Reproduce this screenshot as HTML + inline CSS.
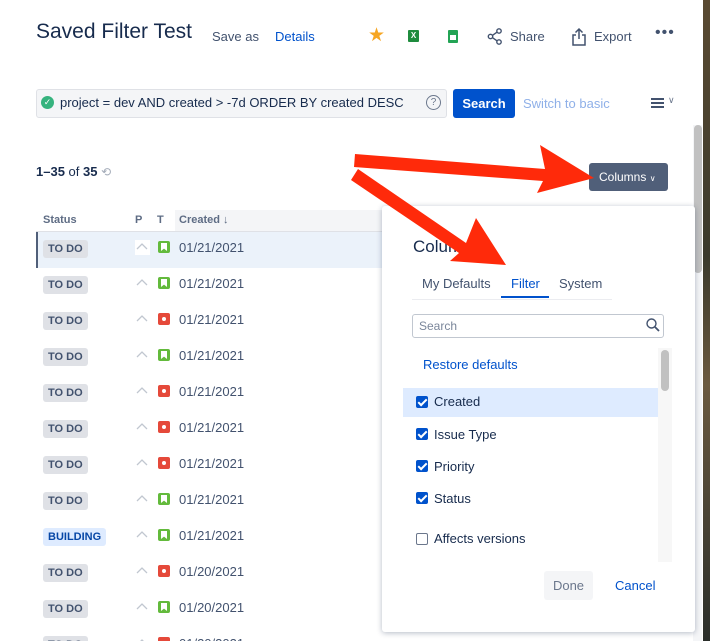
<!DOCTYPE html><html><head><meta charset="utf-8"><style>
*{box-sizing:border-box;margin:0;padding:0}
html,body{width:710px;height:641px;overflow:hidden}
body{background:#fff;font-family:"Liberation Sans",sans-serif;color:#172b4d;position:relative}
.a{position:absolute;white-space:nowrap}
.lz{font-size:11px;font-weight:bold;color:#42526e;background:#dfe1e6;border-radius:3px;padding:3px 5px;}
.row{position:absolute;left:36px;width:346px;height:36px}
.date{position:absolute;left:143px;top:8px;font-size:13px;color:#42526e}
.ic{position:absolute;left:122px;top:9px;width:12px;height:12px;border-radius:2px}
.g{background:#63ba3c}.r{background:#e5493a}
.g:after{content:"";position:absolute;left:3px;top:2px;width:6px;height:8px;background:#fff;clip-path:polygon(0 0,100% 0,100% 100%,50% 70%,0 100%)}
.r:after{content:"";position:absolute;left:4px;top:4px;width:4px;height:4px;border-radius:50%;background:#fff}
.pr{position:absolute;left:99px;top:9px;width:14px;height:10px}
.cb{position:absolute;left:416px;width:12px;height:12px;border-radius:2px;background:#0052cc}
.cb:after{content:"";position:absolute;left:4px;top:1px;width:3px;height:7px;border:solid #fff;border-width:0 2px 2px 0;transform:rotate(45deg)}
.it{font-size:13px;color:#172b4d}
</style></head><body>
<div class="a" style="left:703px;top:0;width:7px;height:641px;background:linear-gradient(#5a4a32,#3b3a2c 40%,#6b5a40 60%,#2a2e2a)"></div>
<div class="a" style="left:693px;top:125px;width:9px;height:516px;background:#f4f5f7"></div>
<div class="a" style="left:694px;top:125px;width:8px;height:148px;background:#c1c1c1;border-radius:4px"></div>
<div class="a" style="left:36px;top:20px;font-size:21px;font-weight:500">Saved Filter Test</div>
<div class="a" style="left:212px;top:29px;font-size:13px;color:#42526e">Save as</div>
<div class="a" style="left:275px;top:29px;font-size:13px;color:#0052cc">Details</div>
<div class="a" style="left:368px;top:26px;font-size:19px;color:#f6a623;line-height:20px">★</div>
<div class="a" style="left:408px;top:30px;width:11px;height:12px;background:#1f8c3e;border-radius:1px;color:#fff;font-size:8px;font-weight:bold;text-align:center;line-height:12px">X</div>
<div class="a" style="left:448px;top:30px;width:10px;height:13px;background:#23a455;border-radius:1px"><div style="margin:5px 2px;width:6px;height:5px;background:#fff"></div></div>
<svg class="a" style="left:487px;top:28px" width="16" height="17" viewBox="0 0 16 17"><g fill="none" stroke="#42526e" stroke-width="1.4"><circle cx="12" cy="3" r="2.2"/><circle cx="3.5" cy="8.5" r="2.2"/><circle cx="12" cy="14" r="2.2"/><path d="M5.5 7.3L10 4.2M5.5 9.7L10 12.8"/></g></svg>
<div class="a" style="left:510px;top:29px;font-size:13px;color:#42526e">Share</div>
<svg class="a" style="left:571px;top:27px" width="16" height="19" viewBox="0 0 16 19"><g fill="none" stroke="#42526e" stroke-width="1.5"><path d="M8 12V2M4.5 5.5L8 2l3.5 3.5M5 8H2v10h12V8h-3"/></g></svg>
<div class="a" style="left:594px;top:29px;font-size:13px;color:#42526e">Export</div>
<div class="a" style="left:655px;top:24px;font-size:16px;color:#42526e;letter-spacing:1px">•••</div>
<div class="a" style="left:36px;top:89px;width:411px;height:29px;background:#f4f5f7;border:1px solid #dfe1e6;border-radius:3px"></div>
<div class="a" style="left:41px;top:96px;width:13px;height:13px;border-radius:50%;background:#36b37e;color:#fff;font-size:9px;text-align:center;line-height:13px">✓</div>
<div class="a" style="left:60px;top:95px;font-size:13px;color:#172b4d">project = dev AND created &gt; -7d ORDER BY created DESC</div>
<div class="a" style="left:426px;top:95px;width:15px;height:15px;border:1.3px solid #6b778c;border-radius:50%;font-size:10px;text-align:center;line-height:13px;color:#6b778c">?</div>
<div class="a" style="left:453px;top:89px;width:62px;height:29px;background:#0052cc;border-radius:3px;color:#fff;font-size:13px;font-weight:bold;text-align:center;line-height:29px">Search</div>
<div class="a" style="left:523px;top:96px;font-size:13px;color:#8fb0e8">Switch to basic</div>
<div class="a" style="left:651px;top:98px;width:13px;height:2px;background:#42526e;box-shadow:0 4px #42526e,0 8px #42526e"></div>
<div class="a" style="left:668px;top:95px;font-size:9px;color:#6b778c">∨</div>
<div class="a" style="left:36px;top:164px;font-size:13px;color:#172b4d"><b>1–35</b> of <b>35</b> <span style="color:#a5adba;font-size:12px">⟲</span></div>
<div class="a" style="left:589px;top:163px;width:79px;height:28px;background:#505f79;border-radius:3px;color:#fff;font-size:12px;line-height:28px;padding-left:10px">Columns <span style="font-size:8px">∨</span></div>
<div class="a" style="left:175px;top:210px;width:210px;height:22px;background:#f4f5f7"></div>
<div class="a" style="left:43px;top:214px;font-size:11px;font-weight:bold;color:#5e6c84">Status</div>
<div class="a" style="left:135px;top:214px;font-size:11px;font-weight:bold;color:#5e6c84">P</div>
<div class="a" style="left:157px;top:214px;font-size:11px;font-weight:bold;color:#5e6c84">T</div>
<div class="a" style="left:179px;top:214px;font-size:11px;font-weight:bold;color:#5e6c84">Created ↓</div>
<div class="a" style="left:36px;top:231px;width:346px;height:1px;background:#dfe1e6"></div>
<div class="a" style="left:36px;top:232px;width:346px;height:36px;background:#ebf2fa;border-left:2px solid #505f79"></div>
<div class="a" style="left:135px;top:240px;width:15px;height:15px;background:#fff"></div>
<div id="rows"></div>
<script>
(function(){var html="";
var d=["01/21/2021","01/21/2021","01/21/2021","01/21/2021","01/21/2021","01/21/2021","01/21/2021","01/21/2021","01/21/2021","01/20/2021","01/20/2021","01/20/2021"];
var ty=["g","g","r","g","r","r","r","g","g","r","g","r"];
for(var i=0;i<12;i++){var yy=232+i*36;
var st=i==8?'<span class="lz" style="background:#deebff;color:#0747a6">BUILDING</span>':'<span class="lz">TO DO</span>';
html+='<div class="row" style="top:'+yy+'px"><div class="a" style="left:7px;top:7px">'+st+'</div><svg class="pr" viewBox="0 0 14 10"><path d="M2 8l5-5 5 5" fill="none" stroke="#c1c7d0" stroke-width="1.3"/></svg><div class="ic '+ty[i]+'"></div><div class="date">'+d[i]+'</div></div>';}
document.getElementById("rows").innerHTML=html;})();
</script>
<div class="a" style="left:382px;top:206px;width:313px;height:426px;background:#fff;border-radius:3px;box-shadow:0 1px 6px rgba(9,30,66,.3)"></div>
<div class="a" style="left:413px;top:237px;font-size:17px;color:#172b4d">Columns</div>
<div class="a" style="left:412px;top:299px;width:200px;height:1px;background:#ebecf0"></div>
<div class="a" style="left:422px;top:276px;font-size:13px;color:#42526e">My Defaults</div>
<div class="a" style="left:511px;top:276px;font-size:13px;color:#0052cc">Filter</div>
<div class="a" style="left:501px;top:296px;width:48px;height:2px;background:#0052cc"></div>
<div class="a" style="left:559px;top:276px;font-size:13px;color:#42526e">System</div>
<div class="a" style="left:412px;top:314px;width:252px;height:24px;border:1px solid #c1c7d0;border-radius:3px"></div>
<div class="a" style="left:419px;top:319px;font-size:12px;color:#7a869a">Search</div>
<svg class="a" style="left:645px;top:317px" width="16" height="16" viewBox="0 0 16 16"><circle cx="6.5" cy="6.5" r="4.5" fill="none" stroke="#42526e" stroke-width="1.4"/><path d="M10 10l4 4" stroke="#42526e" stroke-width="1.8"/></svg>
<div class="a" style="left:658px;top:348px;width:14px;height:214px;background:#f7f7f7"></div>
<div class="a" style="left:661px;top:350px;width:8px;height:41px;background:#c1c1c1;border-radius:4px"></div>
<div class="a" style="left:423px;top:357px;font-size:13px;color:#0052cc">Restore defaults</div>
<div class="a" style="left:403px;top:388px;width:255px;height:29px;background:#deebff"></div>
<div class="cb a" style="top:396px"></div><div class="a it" style="left:434px;top:394px">Created</div>
<div class="cb a" style="top:428px"></div><div class="a it" style="left:434px;top:427px">Issue Type</div>
<div class="cb a" style="top:460px"></div><div class="a it" style="left:434px;top:459px">Priority</div>
<div class="cb a" style="top:492px"></div><div class="a it" style="left:434px;top:491px">Status</div>
<div class="a" style="left:416px;top:533px;width:12px;height:12px;border:1.3px solid #6b778c;border-radius:2px"></div><div class="a it" style="left:434px;top:531px">Affects versions</div>
<div class="a" style="left:544px;top:571px;width:49px;height:29px;background:#f4f5f7;border-radius:3px;font-size:13px;color:#6b778c;text-align:center;line-height:29px">Done</div>
<div class="a" style="left:615px;top:578px;font-size:13px;color:#0052cc">Cancel</div>
<svg class="a" style="left:0;top:0" width="710" height="641"><g fill="#ff2a0a"><polygon points="355,154 545,169 540,145 594,178 537,193 543,181 354,167"/><polygon points="358,169 466,243 476,218 506,265 450,261 459,253 351,180"/></g></svg>
</body></html>
